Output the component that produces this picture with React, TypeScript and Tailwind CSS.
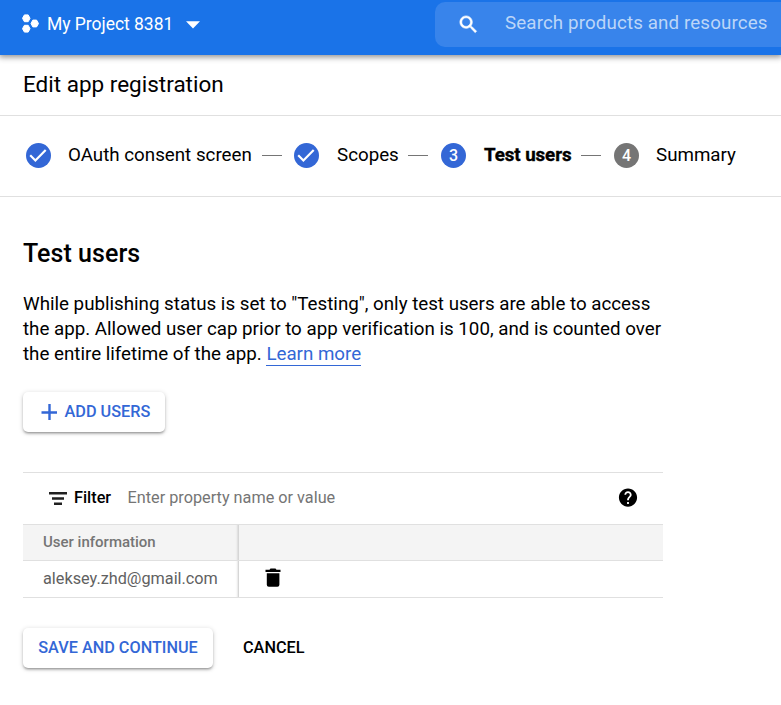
import React from "react";

function Check() {
  return (
    <svg className="block h-[25px] w-[25px]" viewBox="0 0 25 25">
      <circle cx="12.5" cy="12.5" r="12.5" fill="#3367d6" />
      <path d="M4.2 12.3l5.2 5.2L19.7 7.1" fill="none" stroke="#fff" strokeWidth="2.2" />
    </svg>
  );
}

function StepNumber({ value, className }: { value: number; className: string }) {
  return (
    <span
      className={`flex h-[25px] w-[25px] items-center justify-center rounded-full text-[16px] font-medium text-white ${className}`}
    >
      {value}
    </span>
  );
}

function Dash({ className }: { className: string }) {
  return <span className={`h-px w-5 shrink-0 bg-[#757575] ${className}`} />;
}

export default function App() {
  return (
    <div className="h-[705px] w-[781px] overflow-hidden bg-white font-['Roboto',sans-serif] text-black">
      <header className="relative flex h-[55px] bg-[#1a73e8] text-white shadow-[0_1px_6px_1px_rgba(0,0,0,0.45)]">
        <div className="flex h-[47px] w-[435px] items-center pl-[22px]">
          <svg
            className="h-[19px] w-[17px] shrink-0"
            viewBox="0 0 17 19"
            fill="#fff"
            stroke="#fff"
            strokeWidth="1"
            strokeLinejoin="round"
          >
            <path d="M2.4 0.9h3.8L8 4.3 6.2 7.7H2.4L0.5 4.3z" />
            <path d="M10.8 6.1h3.8l1.9 3.4-1.9 3.4h-3.8L9 9.5z" />
            <path d="M2.4 11.3h3.8L8 14.7l-1.8 3.4H2.4L0.5 14.7z" />
          </svg>
          <span className="ml-2 w-[126px] whitespace-nowrap pt-[2px] text-[17.5px] tracking-[-0.03px]">My Project 8381</span>
          <svg className="ml-[13px] mt-[2px] h-[8px] w-[14px]" viewBox="0 0 14 8">
            <path d="M0 0.3h14L7 7.5z" fill="#fff" />
          </svg>
        </div>
        <div className="mt-[2px] flex h-[45px] flex-1 items-center rounded-l-[10px] bg-[#3884eb] pl-[22px]">
          <svg className="h-[23px] w-[23px] shrink-0" viewBox="0 0 24 24" fill="#fff" stroke="#fff" strokeWidth="0.6">
            <path d="M15.5 14h-.79l-.28-.27C15.41 12.59 16 11.11 16 9.5 16 5.91 13.09 3 9.5 3S3 5.91 3 9.5 5.91 16 9.5 16c1.61 0 3.09-.59 4.23-1.57l.27.28v.79l5 4.99L20.49 19l-4.99-5zm-6 0C7.01 14 5 11.99 5 9.5S7.01 5 9.5 5 14 7.01 14 9.5 11.99 14 9.5 14z" />
          </svg>
          <span className="-mt-[3px] ml-[25px] whitespace-nowrap text-[18.75px] tracking-[0.12px] text-[#bcd6f8]">
            Search products and resources
          </span>
        </div>
      </header>

      <div className="flex h-[61px] items-center border-b border-[#e0e0e0] pb-[2px] pl-[23px]">
        <h1 className="text-[22.5px] leading-7">Edit app registration</h1>
      </div>

      <nav className="flex h-[81px] items-center whitespace-nowrap border-b border-[#e0e0e0] pb-[1px] pl-[26px] text-[18.75px] leading-7">
        <Check />
        <span className="-mt-px ml-[17px] w-[184px] shrink-0">OAuth consent screen</span>
        <Dash className="ml-[10px]" />
        <span className="ml-3"><Check /></span>
        <span className="-mt-px ml-[18px] w-[62px] shrink-0">Scopes</span>
        <Dash className="ml-[9px]" />
        <StepNumber value={3} className="ml-[13px] bg-[#3367d6]" />
        <span className="-mt-px ml-[18px] w-[88px] shrink-0 font-bold tracking-[-0.08px] [-webkit-text-stroke:0.35px_black]">
          Test users
        </span>
        <Dash className="ml-[9px]" />
        <StepNumber value={4} className="ml-[13px] bg-[#757575]" />
        <span className="-mt-px ml-[17px]">Summary</span>
      </nav>

      <main className="pl-[23px] pt-[41px]">
        <h2 className="text-[25px] font-medium leading-8 tracking-[0.05px]">Test users</h2>
        <p className="mt-[22px] whitespace-nowrap text-[18.75px] leading-[25px] tracking-[-0.01px]">
          While publishing status is set to "Testing", only test users are able to access
          <br />
          the app. Allowed user cap prior to app verification is 100, and is counted over
          <br />
          the entire lifetime of the app.{" "}
          <a className="border-b border-[#3367d6] text-[#3367d6]">Learn more</a>
        </p>

        <button className="mt-[25px] flex h-10 w-[142px] items-center rounded-[5px] bg-white pl-[18px] text-[#3367d6] shadow-[0_2px_3px_-1px_rgba(0,0,0,0.4),0_1px_5px_0_rgba(0,0,0,0.18)]">
          <svg className="-mt-px h-4 w-4 shrink-0" viewBox="0 0 16 16">
            <path d="M8.5 0v16M0.5 8.5h16" stroke="#3367d6" strokeWidth="2.4" />
          </svg>
          <span className="ml-[7.5px] whitespace-nowrap text-[16.25px] font-medium">ADD USERS</span>
        </button>

        <section className="mt-10 w-[640px] border-t border-[#e0e0e0]">
          <div className="flex h-[51px] items-center pb-[1px] pl-[26px] text-[16.25px] leading-6">
            <svg className="h-[13px] w-[18px] shrink-0" viewBox="0 0 18 13" fill="#212121">
              <path d="M0 0h18v2.5H0zM3 5.2h12v2.5H3zM5 10.4h8v2.5H5z" />
            </svg>
            <span className="ml-[7px] w-[37px] font-medium">Filter</span>
            <span className="ml-[16.5px] text-[#757575]">Enter property name or value</span>
            <svg className="-mt-px ml-auto mr-[25px] h-5 w-5" viewBox="1 1.5 22 22">
              <path d="M12 2C6.48 2 2 6.48 2 12s4.48 10 10 10 10-4.48 10-10S17.52 2 12 2zm1 17h-2v-2h2v2zm2.07-7.75l-.9.92C13.45 12.9 13 13.5 13 15h-2v-.5c0-1.1.45-2.1 1.17-2.83l1.24-1.26c.37-.36.59-.86.59-1.41 0-1.1-.9-2-2-2s-2 .9-2 2H8c0-2.21 1.79-4 4-4s4 1.79 4 4c0 .88-.36 1.68-.93 2.25z" />
            </svg>
          </div>
          <div className="flex h-[37px] border-y border-[#e0e0e0] bg-[#f4f4f4]">
            <div className="flex w-[216px] items-center border-r border-[#d6d6d6] pl-5 text-[15px] font-medium text-[#757575] shadow-[inset_-3px_0_2px_-2px_rgba(0,0,0,0.1)]">
              User information
            </div>
          </div>
          <div className="flex h-[37px] border-b border-[#e0e0e0]">
            <div className="flex w-[216px] items-center border-r border-[#d6d6d6] pl-5 text-[16.25px] leading-6 text-[#616161] shadow-[inset_-3px_0_2px_-2px_rgba(0,0,0,0.1)]">
              aleksey.zhd@gmail.com
            </div>
            <svg className="ml-[26px] mt-[7px] h-5 w-4" viewBox="0 0 16 20">
              <path d="M1.8 5.3h12.6v11.4a2 2 0 0 1-2 2H3.8a2 2 0 0 1-2-2zM0.5 1.8h4l1-1.2h5l1 1.2h4v2.2h-15z" />
            </svg>
          </div>
        </section>

        <div className="mt-[30px] flex h-10 items-center text-[16.25px] font-medium leading-6">
          <button className="h-10 w-[190px] whitespace-nowrap rounded-[5px] bg-white text-[#3367d6] shadow-[0_2px_3px_-1px_rgba(0,0,0,0.4),0_1px_5px_0_rgba(0,0,0,0.18)]">
            SAVE AND CONTINUE
          </button>
          <button className="ml-[30px]">CANCEL</button>
        </div>
      </main>
    </div>
  );
}
